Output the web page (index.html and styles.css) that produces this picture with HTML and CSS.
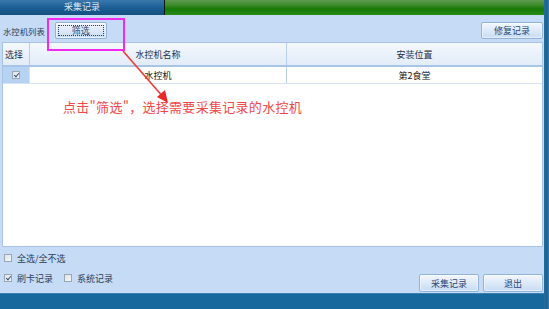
FILE: index.html
```html
<!DOCTYPE html>
<html lang="zh">
<head>
<meta charset="utf-8">
<link rel="stylesheet" href="styles.css">
</head>
<body>
<div class="window">
  <div class="main">
    <div class="titlebar">
      <div class="tab">采集记录</div>
      <div class="sep"></div>
      <div class="green"></div>
    </div>
    <div class="content">
      <div class="toolbar">
        <span class="label">水控机列表</span>
        <button class="btn filter"><span class="focus">筛选</span></button>
        <span class="spacer"></span>
        <button class="btn repair">修复记录</button>
      </div>
      <div class="table">
        <div class="row head">
          <div class="c1">选择</div>
          <div class="c2">水控机名称</div>
          <div class="c3">安装位置</div>
        </div>
        <div class="row data">
          <div class="c1 sel"><span class="cb checked small"></span></div>
          <div class="c2">水控机</div>
          <div class="c3">第2食堂</div>
        </div>
      </div>
      <div class="bottom">
        <div class="opts">
          <label class="opt"><span class="cb"></span>全选/全不选</label>
          <div class="optrow">
            <label class="opt"><span class="cb checked"></span>刷卡记录</label>
            <label class="opt"><span class="cb"></span>系统记录</label>
          </div>
        </div>
        <div class="actions">
          <button class="btn act">采集记录</button>
          <button class="btn act">退出</button>
        </div>
      </div>
      <div class="mark"></div>
      <svg class="arrow" width="60" height="60" viewBox="0 0 60 60">
        <line x1="2" y1="1" x2="43" y2="48" stroke="#f03a3a" stroke-width="1.6"/>
        <polygon points="47,53 36,47 44,40" fill="#e82a2a"/>
      </svg>
      <div class="note">点击"筛选"，选择需要采集记录的水控机</div>
    </div>
    <div class="footer"></div>
  </div>
  <div class="edge"></div>
</div>
</body>
</html>
```
FILE: styles.css
```css
* { box-sizing: border-box; }
html, body { margin: 0; padding: 0; }
body {
  width: 549px; height: 309px; overflow: hidden;
  font-family: "Noto Sans CJK SC", "Noto Sans", sans-serif;
  font-size: 9px; color: #1a2a44;
}
.window { display: flex; width: 549px; height: 309px; }
.main { width: 544px; display: flex; flex-direction: column; }
.edge { width: 5px; background: linear-gradient(to right, #2a6f9e, #1a5f8e 60%, #3c83b4); }

.titlebar { height: 15px; display: flex; }
.tab {
  width: 164px; color: #dfe8f2; text-align: center; line-height: 13px; font-size: 9px;
  background: linear-gradient(to bottom, #3878ad 0%, #1d5f94 50%, #144f80 100%);
}
.sep { width: 1px; background: #0c1a10; }
.green { flex: 1; background: linear-gradient(to bottom, #5e9a4f 0%, #3c8a2a 35%, #167a06 60%, #2a8c18 100%); }

.content {
  flex: 1; position: relative; background: #c6dbf5;
  padding: 7px 1px 0 2px; display: flex; flex-direction: column;
}
.toolbar { height: 17px; display: flex; align-items: center; }
.label { padding-left: 1px; color: #2a3e5c; font-size: 8.4px; }
.spacer { flex: 1; }

.btn {
  font-family: inherit; font-size: 9px; color: #2a4676;
  border: 1px solid #93b2d8; border-radius: 2px; padding: 0;
  background: linear-gradient(to bottom, #f2f7fe 0%, #dde9f8 50%, #c7dcf4 100%);
  box-shadow: inset 0 0 0 1px rgba(255,255,255,0.5);
  display: flex; align-items: center; justify-content: center;
}
.filter { width: 52px; height: 17px; margin-left: 10px; padding: 2px; }
.filter .focus {
  flex: 1; height: 100%; border: 1px dotted #2c3e58;
  display: flex; align-items: center; justify-content: center; line-height: 1;
}
.repair { width: 62px; height: 17px; }

.table {
  margin-top: 3px; height: 205px; background: #fff;
  border: 1px solid #a7c2e2; display: flex; flex-direction: column;
}
.row { display: flex; }
.head {
  height: 24px; background: linear-gradient(to bottom, #f4f8fd, #e2ecf8);
  border-bottom: 2px solid #a8c4e6;
}
.head > div { display: flex; align-items: center; justify-content: center; color: #1f2f48; }
.c1 { width: 27px; border-right: 1px solid #b9cfe9; }
.c2 { width: 257px; border-right: 1px solid #b9cfe9; }
.c3 { flex: 1; }
.head .c1 { justify-content: flex-start; padding-left: 2px; }
.data { height: 17px; border-bottom: 1px solid #d3e2f4; }
.data > div { display: flex; align-items: center; justify-content: center; color: #111; }
.data .c1 { border-right: 1px solid #d3e2f4; }
.data .c1.sel { background: #b6d3f4; }

.cb {
  display: inline-block; width: 8px; height: 8px; border: 1px solid #9aa6b4;
  background: linear-gradient(135deg, #dfe3e8, #f6f7f9); position: relative; margin-right: 5px;
}
.cb.small { margin: 0; }
.cb.checked::after {
  content: ""; position: absolute; left: 2px; top: 0px; width: 2px; height: 4px;
  border: solid #3a4f6e; border-width: 0 1px 1px 0; transform: rotate(40deg);
}

.bottom { flex: 1; display: flex; justify-content: space-between; padding-top: 5px; }
.opts { display: flex; flex-direction: column; gap: 8px; padding-left: 2px; }
.opt { display: flex; align-items: center; height: 12px; color: #2a3e5c; }
.optrow { display: flex; gap: 11px; }
.actions { display: flex; gap: 4px; padding-top: 22px; }
.act { width: 60px; height: 18px; }

.mark {
  position: absolute; left: 47px; top: 3px; width: 78px; height: 33px;
  border: 2px solid #f22af0;
}
.arrow { position: absolute; left: 121px; top: 35px; }
.note {
  position: absolute; left: 63px; top: 82px; font-size: 13px; color: #f24848;
  font-family: "Noto Sans CJK SC", sans-serif; letter-spacing: 0.3px;
}
.footer { height: 16px; background: #17689c; border-top: 1px solid #3a7fb0; }
```
